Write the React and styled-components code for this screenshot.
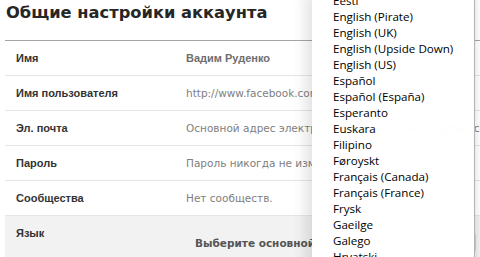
import React from "react";
import styled, { createGlobalStyle } from "styled-components";

const GlobalStyle = createGlobalStyle`
  html, body {
    margin: 0;
    padding: 0;
    background: #fff;
    overflow: hidden;
  }
  body {
    font-family: "DejaVu Sans", "Open Sans", sans-serif;
  }
`;

const Page = styled.div`
  position: relative;
  width: 480px;
  height: 257px;
  overflow: hidden;
  padding: 0 0 0 5px;
  box-sizing: border-box;
`;

const Title = styled.h1`
  margin: 0;
  height: 41px;
  padding: 2px 0 0 1px;
  box-sizing: border-box;
  font-size: 16.3px;
  font-weight: bold;
  color: #262626;
  line-height: 22px;
  border-bottom: 1px solid #a5a5a5;
  width: 490px;
`;

const Row = styled.div`
  display: grid;
  grid-template-columns: 181px 1fr;
  height: ${({ $tall }) => ($tall ? "60px" : "35px")};
  box-sizing: border-box;
  border-bottom: 1px solid #e6e6e6;
  background: ${({ $shaded }) => ($shaded ? "#f2f2f2" : "#fff")};
  width: 490px;
  align-items: ${({ $tall }) => ($tall ? "start" : "center")};
  padding-top: ${({ $tall }) => ($tall ? "11px" : "0")};
`;

const Label = styled.div`
  padding-left: 11px;
  font-family: "Liberation Sans", Arial, sans-serif;
  font-size: 11px;
  line-height: 13px;
  font-weight: bold;
  color: #333;
  white-space: nowrap;
`;

const Value = styled.div`
  font-size: 10.5px;
  line-height: 13px;
  color: ${({ $strong }) => ($strong ? "#6e6e6e" : "#808080")};
  font-weight: ${({ $strong }) => ($strong ? "bold" : "normal")};
  font-family: ${({ $strong }) =>
    $strong ? `"Liberation Sans", Arial, sans-serif` : `"DejaVu Sans", sans-serif`};
  font-size: ${({ $strong }) => ($strong ? "11px" : "10.5px")};
  white-space: nowrap;
  overflow: hidden;
`;

const LangBlock = styled.div`
  display: flex;
  flex-direction: column;
  padding: 10px 0 0 9px;
`;

const LangPrompt = styled.div`
  font-size: 10.5px;
  line-height: 13px;
  font-weight: bold;
  color: #555;
  white-space: nowrap;
`;

const SelectBox = styled.div`
  position: absolute;
  left: 320px;
  top: 232px;
  width: 154px;
  height: 19px;
  border: 1px solid #c3d2e4;
  border-radius: 3px;
  background: #f7f9fc;
`;

const Menu = styled.div`
  position: absolute;
  top: -7px;
  left: 312px;
  width: 162px;
  height: 280px;
  background: rgba(255, 255, 255, 0.98);
  border-right: 1px solid #b4b4b4;
  box-shadow: -6px 0 14px rgba(0, 0, 0, 0.12), 3px 0 4px rgba(0, 0, 0, 0.06);
  display: flex;
  flex-direction: column;
`;

const MenuItem = styled.div`
  height: 16px;
  line-height: 16px;
  padding-left: 21px;
  font-family: "Open Sans", "DejaVu Sans", sans-serif;
  font-size: 11.6px;
  color: #000;
  white-space: nowrap;
`;

const languages = [
  "Eesti",
  "English (Pirate)",
  "English (UK)",
  "English (Upside Down)",
  "English (US)",
  "Español",
  "Español (España)",
  "Esperanto",
  "Euskara",
  "Filipino",
  "Føroyskt",
  "Français (Canada)",
  "Français (France)",
  "Frysk",
  "Gaeilge",
  "Galego",
  "Hrvatski",
];

const rows = [
  { label: "Имя", value: "Вадим Руденко", strong: true },
  { label: "Имя пользователя", value: "http://www.facebook.com/vadim.rudenko" },
  { label: "Эл. почта", value: "Основной адрес электронной почты: rudenko@mail.com" },
  { label: "Пароль", value: "Пароль никогда не изменялся." },
  { label: "Сообщества", value: "Нет сообществ." },
];

const App = () => (
  <>
    <GlobalStyle />
    <Page>
      <Title>Общие настройки аккаунта</Title>
      {rows.map((r) => (
        <Row key={r.label}>
          <Label>{r.label}</Label>
          <Value $strong={r.strong}>{r.value}</Value>
        </Row>
      ))}
      <Row $shaded $tall>
        <Label>Язык</Label>
        <LangBlock>
          <LangPrompt>Выберите основной язык:</LangPrompt>
        </LangBlock>
      </Row>
      <SelectBox />
      <Menu>
        {languages.map((l) => (
          <MenuItem key={l}>{l}</MenuItem>
        ))}
      </Menu>
    </Page>
  </>
);

export default App;
